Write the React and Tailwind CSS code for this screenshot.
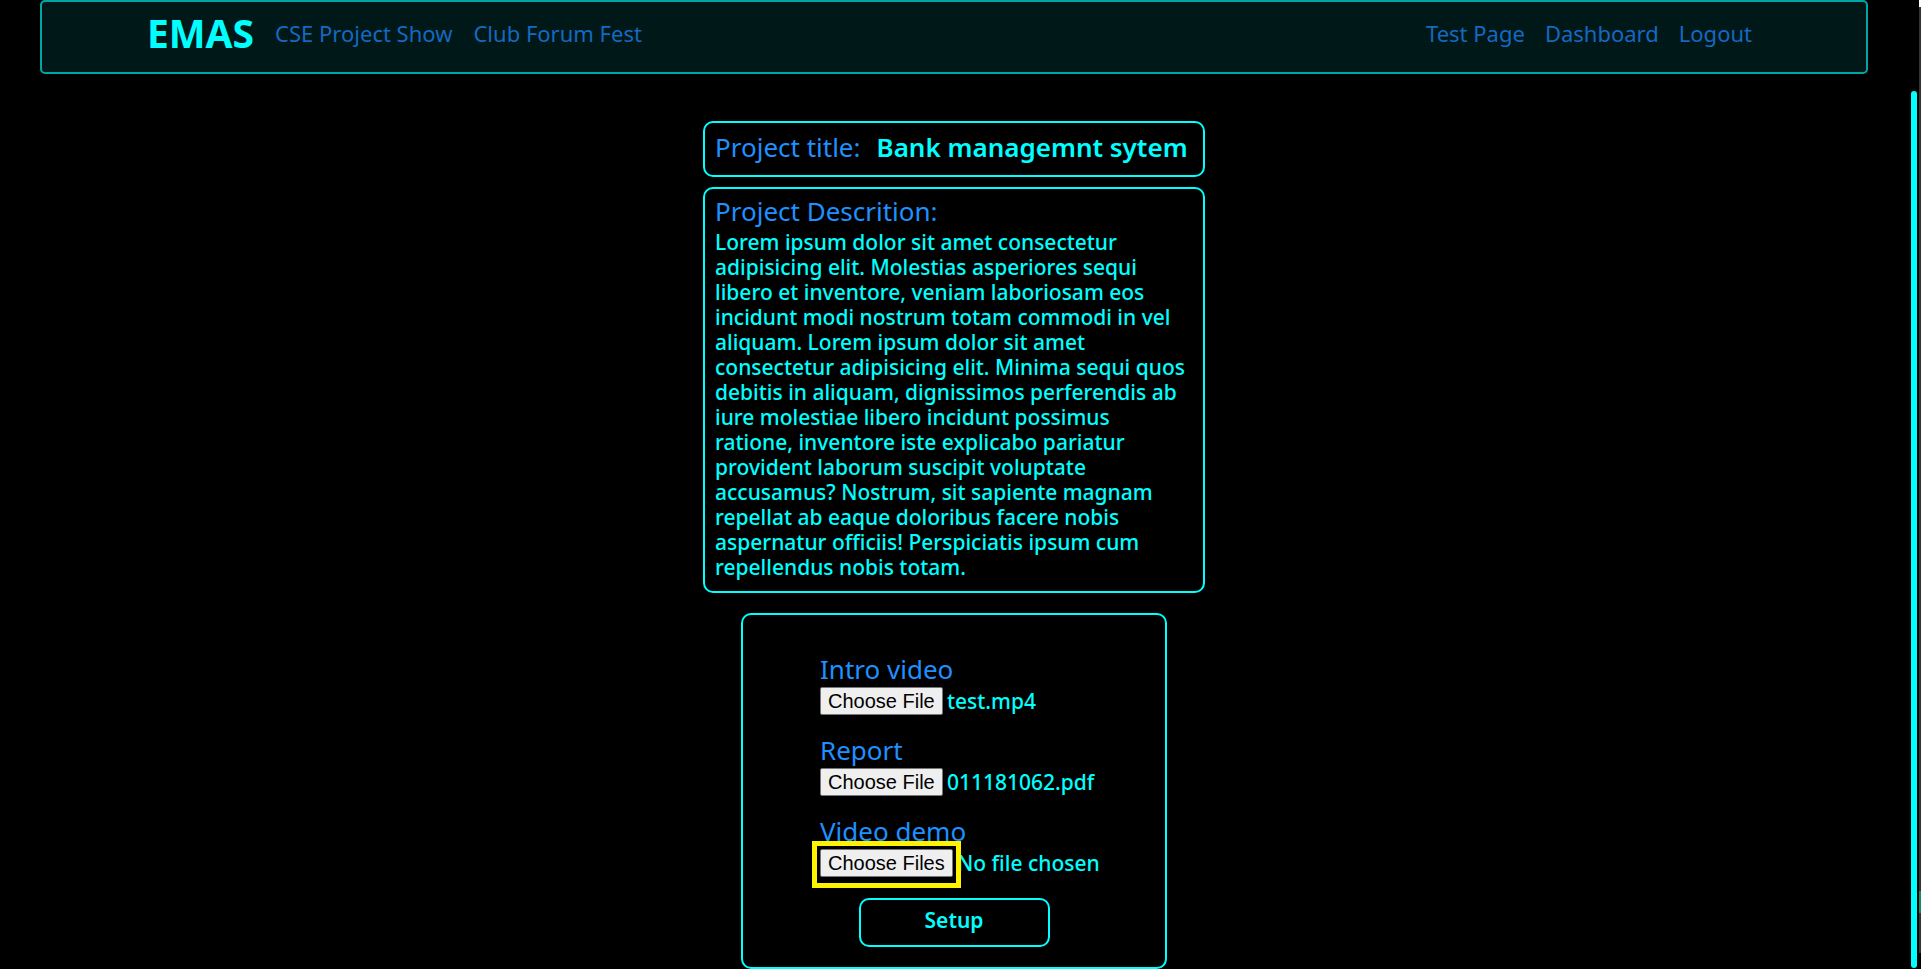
const description = [
  "Lorem ipsum dolor sit amet consectetur",
  "adipisicing elit. Molestias asperiores sequi",
  "libero et inventore, veniam laboriosam eos",
  "incidunt modi nostrum totam commodi in vel",
  "aliquam. Lorem ipsum dolor sit amet",
  "consectetur adipisicing elit. Minima sequi quos",
  "debitis in aliquam, dignissimos perferendis ab",
  "iure molestiae libero incidunt possimus",
  "ratione, inventore iste explicabo pariatur",
  "provident laborum suscipit voluptate",
  "accusamus? Nostrum, sit sapiente magnam",
  "repellat ab eaque doloribus facere nobis",
  "aspernatur officiis! Perspiciatis ipsum cum",
  "repellendus nobis totam.",
];

const fileButton =
  "h-7 shrink-0 overflow-hidden text-[20px] leading-[23px] text-transparent file:mr-8 file:h-7 file:rounded-[2px] file:border file:border-solid file:border-[#767676] file:bg-[#efefef] file:px-[7px] file:font-['Liberation_Sans',sans-serif] file:text-[20px] file:leading-[23px] file:text-black";

function NavBar() {
  return (
    <nav className="mx-10 flex h-[74px] items-start justify-between rounded-[5px] border-2 border-[#00a6a6] bg-[#001818] pr-[114px] pl-[105px] text-[22px] leading-[30px] text-[#1569c1]">
      <div className="flex h-[62px] items-center gap-[21px]">
        <a href="#home" className="text-[39px] leading-[50px] font-bold text-[#00ffff]">
          EMAS
        </a>
        <a href="#show">CSE Project Show</a>
        <a href="#fest">Club Forum Fest</a>
      </div>
      <div className="flex h-[62px] items-center gap-5">
        <a href="#test">Test Page</a>
        <a href="#dashboard">Dashboard</a>
        <a href="#logout">Logout</a>
      </div>
    </nav>
  );
}

function FileField({ id, label, value, multiple, highlighted }) {
  return (
    <div className="mb-[19px]">
      <label htmlFor={id} className="mb-0.5 block text-[26px] leading-8 text-[#1e90ff]">
        {label}
      </label>
      <div className="relative flex items-center">
        <input
          id={id}
          type="file"
          multiple={multiple}
          className={`${fileButton} ${multiple ? "w-[133px]" : "w-[123px]"}`}
        />
        <span className="ml-1 text-[21px] leading-7 font-medium whitespace-nowrap">{value}</span>
        {highlighted && (
          <span className="pointer-events-none absolute -top-2 -left-2 h-[47px] w-[149px] border-5 border-[#fff200]" />
        )}
      </div>
    </div>
  );
}

function ScrollRail() {
  return (
    <div aria-hidden="true" className="flex w-[13px] shrink-0 justify-between pl-[3px]">
      <div className="flex pt-[91px] pb-[1px]">
        <div className="w-[6px] rounded-full bg-[#00ffff]" />
      </div>
      <div className="flex w-[2px] flex-col pb-4">
        <div className="h-[7px] bg-white" />
        <div className="flex-1 bg-[#333333]" />
        <div className="h-[22px] bg-[#1a8a63]" />
        <div className="h-10 bg-[#333333]" />
      </div>
    </div>
  );
}

export default function App() {
  return (
    <div className="flex min-h-screen bg-black font-['Noto_Sans',sans-serif] text-[#00ffff]">
      <div className="min-w-0 flex-1">
        <NavBar />
        <main className="flex flex-col items-center pt-[47px]">
          <section className="w-[502px] rounded-[10px] border-2 border-[#00ffff] px-[10px] pt-2 pb-3 text-[26px] leading-8">
            <h1 className="flex gap-4 whitespace-nowrap">
              <span className="text-[#1e90ff]">Project title:</span>
              <span className="font-semibold">Bank managemnt sytem</span>
            </h1>
          </section>
          <section className="mt-[10px] w-[502px] rounded-[10px] border-2 border-[#00ffff] px-[10px] pt-1.5 pb-[11px]">
            <h2 className="mb-[3px] text-[26px] leading-8 text-[#1e90ff]">Project Descrition:</h2>
            <p className="text-[21px] leading-[25px] font-medium">
              {description.map((line) => (
                <span key={line} className="block whitespace-nowrap">
                  {line}{" "}
                </span>
              ))}
            </p>
          </section>
          <form
            onSubmit={(event) => event.preventDefault()}
            className="mt-5 flex w-[426px] flex-col rounded-[10px] border-2 border-[#00ffff] px-[77px] pt-[38px] pb-5"
          >
            <FileField id="intro" label="Intro video" value="test.mp4" />
            <FileField id="report" label="Report" value="011181062.pdf" />
            <FileField id="demo" label="Video demo" value="No file chosen" multiple highlighted />
            <button
              type="submit"
              className="mt-0.5 h-[49px] w-[191px] self-center rounded-[10px] border-2 border-[#00ffff] pb-1 text-[21px] font-semibold"
            >
              Setup
            </button>
          </form>
        </main>
      </div>
      <ScrollRail />
    </div>
  );
}
